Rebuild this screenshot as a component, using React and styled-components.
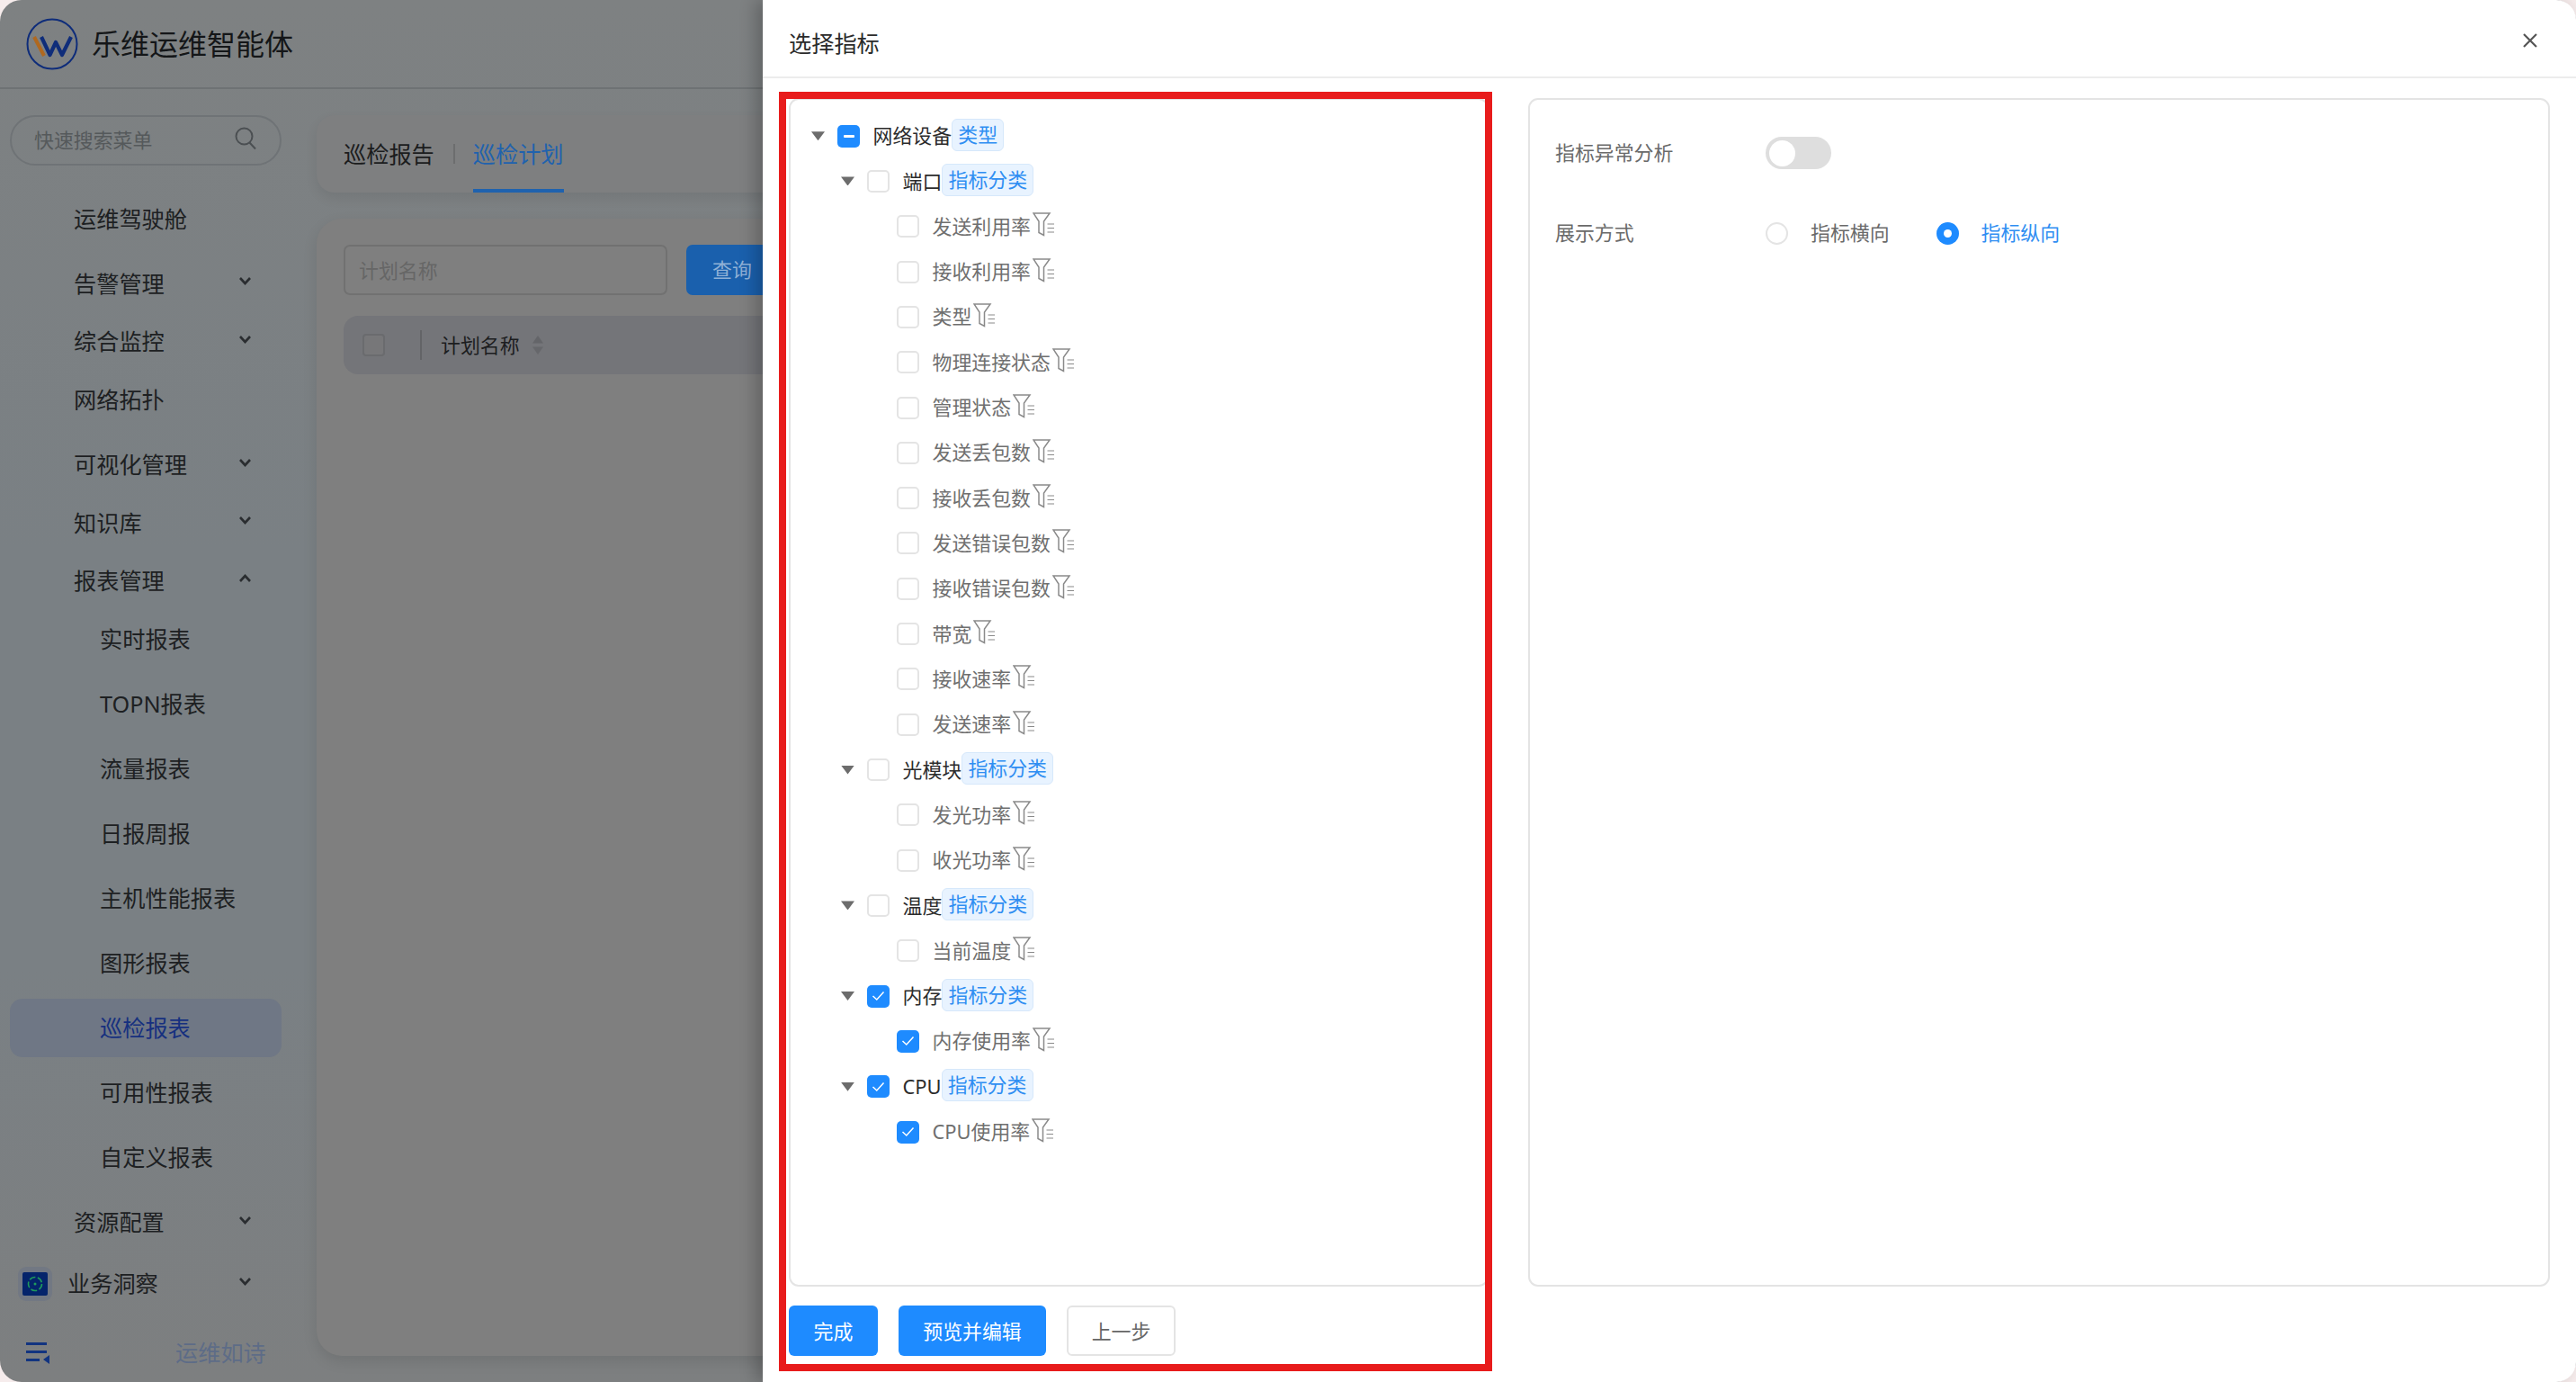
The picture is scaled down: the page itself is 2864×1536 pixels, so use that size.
import React from "react";
import styled, { createGlobalStyle } from "styled-components";

const Global = createGlobalStyle`
  html, body { margin: 0; padding: 0; background: #f6ecec; }
  body { font-family: "Noto Sans", "Noto Sans CJK SC", sans-serif; line-height: 1; }
  * { box-sizing: border-box; }
`;

const Page = styled.div`
  position: relative;
  width: 2864px;
  height: 1536px;
  overflow: hidden;
`;
const AppWindow = styled.div`
  width: 100%;
  height: 100%;
  border-radius: 24px;
  overflow: hidden;
  display: flex;
  flex-direction: column;
  background: linear-gradient(180deg, #7e8182 0%, #7a8084 40%, #7a8084 70%, #7d7f80 100%);
  color: #1d1f20;
  font-size: 25.2px;
`;
const TopBar = styled.header`
  height: 99px;
  flex: none;
  display: flex;
  align-items: center;
  padding-left: 29px;
  gap: 15px;
  border-bottom: 2px solid #6e7274;
`;
const Brand = styled.span`
  font-size: 32px;
  line-height: 1;
  color: #141618;
`;
const Body = styled.div`
  flex: 1;
  min-height: 0;
  display: flex;
`;
const Sidebar = styled.aside`
  width: 352px;
  flex: none;
  display: flex;
  flex-direction: column;
  padding: 29px 0 14px 11px;
`;
const SearchBox = styled.div`
  width: 302px;
  height: 56px;
  flex: none;
  border: 2px solid #6f7376;
  border-radius: 28px;
  display: flex;
  align-items: center;
  justify-content: space-between;
  padding: 0 26px 0 25px;
  font-size: 21.9px;
  color: #55595b;
  margin-bottom: 27px;
`;
const NavRow = styled.div`
  width: 302px;
  height: 64.7px;
  flex: none;
  display: flex;
  align-items: center;
  justify-content: space-between;
  padding: 0 34px 0 ${(p) => p.$indent}px;
  margin-bottom: ${(p) => (p.$leaf ? 7.3 : 0)}px;
  margin-top: ${(p) => p.$top || 0}px;
  border-radius: 14px;
  background: ${(p) => (p.$active ? "#6f7785" : "transparent")};
  color: ${(p) => (p.$active ? "#16307f" : "#1d2022")};
`;
const NavLabel = styled.span`
  display: flex;
  align-items: center;
`;
const InsightBadge = styled.span`
  width: 38px;
  height: 38px;
  border-radius: 9px;
  background: #727883;
  display: flex;
  align-items: center;
  justify-content: center;
  margin-right: 17px;
  margin-left: -62px;
`;
const SideFooter = styled.div`
  margin-top: auto;
  height: 36px;
  flex: none;
  display: flex;
  align-items: center;
  padding-left: 18px;
  gap: 140px;
  color: #5d6c87;
`;
const Main = styled.main`
  flex: 1;
  min-width: 0;
  display: flex;
  flex-direction: column;
  gap: 29px;
  padding: 29px 0;
`;
const TabCard = styled.div`
  height: 86px;
  flex: none;
  background: #7e7f80;
  border-radius: 20px 0 0 20px;
  box-shadow: 0 6px 14px rgba(0, 0, 0, 0.08);
  display: flex;
  align-items: stretch;
  padding-left: 30px;
`;
const Tab = styled.div`
  display: flex;
  align-items: center;
  padding-top: 6px;
  border-bottom: 4px solid ${(p) => (p.$active ? "#1f62ae" : "transparent")};
  color: ${(p) => (p.$active ? "#1f62ae" : "#1b1c1d")};
`;
const TabDivider = styled.div`
  width: 2px;
  height: 22px;
  background: #6c6d6e;
  align-self: center;
  margin: 0 20px 0 21px;
`;
const ContentCard = styled.div`
  flex: 1;
  background: #7f7f7f;
  border-radius: 28px 0 0 28px;
  box-shadow: 0 6px 16px rgba(0, 0, 0, 0.1);
  padding: 29px 0 0 30px;
`;
const FilterBar = styled.div`
  display: flex;
  gap: 21px;
  height: 56px;
`;
const PlanInput = styled.div`
  width: 360px;
  border: 2px solid #717171;
  border-radius: 7px;
  display: flex;
  align-items: center;
  padding: 2px 0 0 15px;
  font-size: 21.9px;
  color: #666666;
`;
const QueryButton = styled.div`
  width: 120px;
  background: #1a60ad;
  border-radius: 7px;
  color: #8fb0d6;
  font-size: 21.9px;
  display: flex;
  align-items: center;
  padding-left: 29px;
`;
const TableHead = styled.div`
  height: 65px;
  margin-top: 23px;
  background: #747579;
  border-radius: 16px 0 0 16px;
  display: flex;
  align-items: center;
  padding-left: 21px;
  font-size: 21.9px;
  color: #1c1d1f;
`;
const HeadCheck = styled.span`
  width: 25px;
  height: 25px;
  border: 2px solid #6a6b6e;
  border-radius: 4px;
  background: #777779;
`;
const HeadDivider = styled.span`
  width: 2px;
  height: 33px;
  background: #636467;
  margin: 0 21px 0 39px;
`;

const Drawer = styled.section`
  position: absolute;
  top: 0;
  right: 0;
  bottom: 0;
  width: 2016px;
  background: #ffffff;
  border-radius: 0 22px 22px 0;
  box-shadow: -8px 0 18px rgba(0, 0, 0, 0.22);
  display: flex;
  flex-direction: column;
`;
const DrawerHead = styled.div`
  height: 87px;
  flex: none;
  border-bottom: 2px solid #ececec;
  display: flex;
  align-items: center;
  justify-content: space-between;
  padding: 5px 43px 0 29px;
  font-size: 25.2px;
  color: #2b2b2b;
`;
const DrawerTitle = styled.span`
  padding-top: 8px;
`;
const DrawerBody = styled.div`
  flex: 1;
  min-height: 0;
  display: flex;
  gap: 44px;
  padding: 22px 29px 0 29px;
`;
const LeftColumn = styled.div`
  width: 778px;
  flex: none;
  display: flex;
  flex-direction: column;
`;
const TreePanel = styled.div`
  height: 1321px;
  flex: none;
  border: 2px solid #e4e4e4;
  border-radius: 11px;
  padding-top: 15px;
`;
const TreeRow = styled.div`
  height: 50.32px;
  display: flex;
  align-items: center;
  padding-left: ${(p) => 23 + p.$level * 33}px;
  font-size: 21.9px;
  line-height: 1;
  color: ${(p) => (p.$leaf ? "#6f6f6f" : "#2c2c2c")};
`;
const Caret = styled.span`
  width: 15px;
  height: 10px;
  flex: none;
  margin-right: 14px;
  background: #6c6c6c;
  clip-path: polygon(0 0, 100% 0, 50% 100%);
  visibility: ${(p) => (p.$hidden ? "hidden" : "visible")};
`;
const Check = styled.span`
  width: 25px;
  height: 25px;
  flex: none;
  margin-right: 14.5px;
  border-radius: 5px;
  display: flex;
  align-items: center;
  justify-content: center;
  border: ${(p) => (p.$state === "none" ? "2px solid #e4e4e4" : "none")};
  background: ${(p) => (p.$state === "none" ? "#ffffff" : "#1e8bff")};
`;
const Minus = styled.span`
  width: 12px;
  height: 3px;
  border-radius: 1px;
  background: #ffffff;
`;
const Tag = styled.span`
  height: 36px;
  flex: none;
  margin-bottom: 3px;
  padding: 0 6.2px;
  display: flex;
  align-items: center;
  background: #e8f3ff;
  border: 1.5px solid #d6e8fb;
  border-radius: 6px;
  color: #2f8ef2;
  font-size: 21.9px;
`;
const Footer = styled.div`
  display: flex;
  gap: 23px;
  margin-top: 21px;
`;
const ActionButton = styled.button`
  height: 56px;
  width: ${(p) => p.$w}px;
  padding: 0 0 2px;
  border-radius: 6px;
  border: ${(p) => (p.$primary ? "none" : "2px solid #e4e4e4")};
  background: ${(p) => (p.$primary ? "#1e8bff" : "#ffffff")};
  color: ${(p) => (p.$primary ? "#ffffff" : "#666666")};
  font-family: inherit;
  font-size: 21.9px;
`;
const SettingsPanel = styled.div`
  flex: 1;
  height: 1321px;
  border: 2px solid #e4e4e4;
  border-radius: 11px;
  padding: 0 0 0 28px;
`;
const SettingRow = styled.div`
  height: ${(p) => p.$h}px;
  margin-top: ${(p) => p.$mt}px;
  display: flex;
  align-items: center;
  font-size: 21.9px;
  color: #6a6a6a;
`;
const SettingLabel = styled.span`
  width: 234px;
  flex: none;
`;
const Switch = styled.span`
  width: 73px;
  height: 36px;
  padding: 3.5px;
  border-radius: 18px;
  background: #dedede;
  display: flex;
`;
const Knob = styled.span`
  width: 29px;
  height: 29px;
  border-radius: 50%;
  background: #ffffff;
`;
const RadioDot = styled.span`
  width: 25px;
  height: 25px;
  flex: none;
  border-radius: 50%;
  margin-right: 25px;
  display: flex;
  align-items: center;
  justify-content: center;
  border: ${(p) => (p.$on ? "none" : "2px solid #e4e4e4")};
  background: ${(p) => (p.$on ? "#1e8bff" : "#ffffff")};
`;
const RadioInner = styled.span`
  width: 9px;
  height: 9px;
  border-radius: 50%;
  background: #ffffff;
`;
const RadioText = styled.span`
  color: ${(p) => (p.$on ? "#2f8ef2" : "#6a6a6a")};
  margin-right: 52px;
`;
const Highlight = styled.div`
  position: absolute;
  left: 866px;
  top: 102px;
  width: 793px;
  height: 1422px;
  border: 8px solid #e81c1c;
  pointer-events: none;
`;

const Logo = () => (
  <svg width="58" height="58" viewBox="0 0 58 58" fill="none">
    <circle cx="29" cy="29" r="27.5" stroke="#0f2d7a" strokeWidth="2" />
    <path d="M9 21L20 42" stroke="#b0681f" strokeWidth="4" />
    <path d="M17 21L26.5 41L33 27L40 41L50 21" stroke="#0f2d7a" strokeWidth="4.2" strokeLinejoin="round" />
  </svg>
);
const SearchIcon = () => (
  <svg width="24" height="26" viewBox="0 0 24 26" fill="none" stroke="#4b4f52" strokeWidth="2" style={{ marginTop: -4 }}>
    <circle cx="10.5" cy="10.5" r="9" />
    <path d="M16.5 17.5L23 24.5" />
  </svg>
);
const Chevron = ({ up }) => (
  <svg width="13" height="10" viewBox="0 0 13 10" fill="none" stroke="#2a2d30" strokeWidth="2.6" style={{ transform: "translateY(-3px)" }}>
    <path d={up ? "M1 8L6.5 2L12 8" : "M1 2L6.5 8L12 2"} />
  </svg>
);
const InsightIcon = () => (
  <svg width="28" height="26" viewBox="0 0 28 26">
    <rect width="28" height="26" rx="2" fill="#05246b" />
    <circle cx="14" cy="13" r="7.5" fill="none" stroke="#1f9a5c" strokeWidth="1.6" strokeDasharray="7 2.5" />
    <circle cx="14" cy="13" r="1.5" fill="#1f9a5c" />
  </svg>
);
const MenuIcon = () => (
  <svg width="26" height="24" viewBox="0 0 26 24" fill="#123480">
    <rect x="0" y="0" width="23" height="3" />
    <rect x="0" y="9" width="23" height="3" />
    <rect x="0" y="18" width="15" height="3" />
    <path d="M26 14V24L19 19Z" />
  </svg>
);
const SortIcon = () => (
  <svg width="14" height="21" viewBox="0 0 14 21" fill="#646569" style={{ marginLeft: 13 }}>
    <path d="M7 0L13 8.5H1Z" />
    <path d="M7 21L13 12.5H1Z" opacity="0.85" />
  </svg>
);
const CheckMark = () => (
  <svg width="15" height="12" viewBox="0 0 15 12" fill="none" stroke="#ffffff" strokeWidth="1.5">
    <path d="M1.5 6L5.8 10L13.5 1.5" />
  </svg>
);
const FilterIcon = () => (
  <svg width="24" height="27" viewBox="0 0 24 27" fill="none" stroke="#8a8a8a" strokeWidth="1.5" style={{ marginLeft: 2, marginTop: -4, flex: "none" }}>
    <path d="M1 1H19L12.5 10V25.5L7 22.5V10Z" />
    <path d="M16.5 13H24M16.5 17.5H24M16.5 22H24" strokeWidth="1.2" />
  </svg>
);
const CloseIcon = () => (
  <svg width="16" height="16" viewBox="0 0 16 16" stroke="#555555" strokeWidth="2.2" style={{ marginTop: -1 }}>
    <path d="M1 1L15 15M15 1L1 15" />
  </svg>
);

const nav = [
  { label: "运维驾驶舱", leaf: true },
  { label: "告警管理" },
  { label: "综合监控" },
  { label: "网络拓扑", leaf: true },
  { label: "可视化管理" },
  { label: "知识库" },
  { label: "报表管理", open: true },
  { label: "实时报表", sub: true },
  { label: "TOPN报表", sub: true },
  { label: "流量报表", sub: true },
  { label: "日报周报", sub: true },
  { label: "主机性能报表", sub: true },
  { label: "图形报表", sub: true },
  { label: "巡检报表", sub: true, active: true },
  { label: "可用性报表", sub: true },
  { label: "自定义报表", sub: true },
  { label: "资源配置" },
];

const tree = [
  { level: 0, label: "网络设备", tag: "类型", state: "part" },
  { level: 1, label: "端口", tag: "指标分类", state: "none" },
  ...["发送利用率", "接收利用率", "类型", "物理连接状态", "管理状态", "发送丢包数", "接收丢包数", "发送错误包数", "接收错误包数", "带宽", "接收速率", "发送速率"].map((label) => ({ level: 2, label, state: "none", leaf: true })),
  { level: 1, label: "光模块", tag: "指标分类", state: "none" },
  { level: 2, label: "发光功率", state: "none", leaf: true },
  { level: 2, label: "收光功率", state: "none", leaf: true },
  { level: 1, label: "温度", tag: "指标分类", state: "none" },
  { level: 2, label: "当前温度", state: "none", leaf: true },
  { level: 1, label: "内存", tag: "指标分类", state: "on" },
  { level: 2, label: "内存使用率", state: "on", leaf: true },
  { level: 1, label: "CPU", tag: "指标分类", state: "on" },
  { level: 2, label: "CPU使用率", state: "on", leaf: true },
];

export default function App() {
  return (
    <Page>
      <Global />
      <AppWindow>
        <TopBar>
          <Logo />
          <Brand>乐维运维智能体</Brand>
        </TopBar>
        <Body>
          <Sidebar>
            <SearchBox>
              快速搜索菜单
              <SearchIcon />
            </SearchBox>
            {nav.map((n) => (
              <NavRow key={n.label} $indent={n.sub ? 100 : 71} $leaf={n.leaf || n.sub} $active={n.active}>
                <NavLabel>{n.label}</NavLabel>
                {!n.leaf && !n.sub && <Chevron up={n.open} />}
              </NavRow>
            ))}
            <NavRow $indent={71} $top={3.3}>
              <NavLabel>
                <InsightBadge>
                  <InsightIcon />
                </InsightBadge>
                业务洞察
              </NavLabel>
              <Chevron />
            </NavRow>
            <SideFooter>
              <MenuIcon />
              运维如诗
            </SideFooter>
          </Sidebar>
          <Main>
            <TabCard>
              <Tab>巡检报告</Tab>
              <TabDivider />
              <Tab $active>巡检计划</Tab>
            </TabCard>
            <ContentCard>
              <FilterBar>
                <PlanInput>计划名称</PlanInput>
                <QueryButton>查询</QueryButton>
              </FilterBar>
              <TableHead>
                <HeadCheck />
                <HeadDivider />
                计划名称
                <SortIcon />
              </TableHead>
            </ContentCard>
          </Main>
        </Body>
      </AppWindow>
      <Drawer>
        <DrawerHead>
          <DrawerTitle>选择指标</DrawerTitle>
          <CloseIcon />
        </DrawerHead>
        <DrawerBody>
          <LeftColumn>
            <TreePanel>
              {tree.map((t, i) => (
                <TreeRow key={i} $level={t.level} $leaf={t.leaf}>
                  <Caret $hidden={t.leaf} />
                  <Check $state={t.state}>
                    {t.state === "part" && <Minus />}
                    {t.state === "on" && <CheckMark />}
                  </Check>
                  {t.label}
                  {t.tag && <Tag>{t.tag}</Tag>}
                  {t.leaf && <FilterIcon />}
                </TreeRow>
              ))}
            </TreePanel>
            <Footer>
              <ActionButton $primary $w={99}>完成</ActionButton>
              <ActionButton $primary $w={164}>预览并编辑</ActionButton>
              <ActionButton $w={121}>上一步</ActionButton>
            </Footer>
          </LeftColumn>
          <SettingsPanel>
            <SettingRow $h={36} $mt={41}>
              <SettingLabel>指标异常分析</SettingLabel>
              <Switch>
                <Knob />
              </Switch>
            </SettingRow>
            <SettingRow $h={36} $mt={53}>
              <SettingLabel>展示方式</SettingLabel>
              <RadioDot />
              <RadioText>指标横向</RadioText>
              <RadioDot $on>
                <RadioInner />
              </RadioDot>
              <RadioText $on>指标纵向</RadioText>
            </SettingRow>
          </SettingsPanel>
        </DrawerBody>
      </Drawer>
      <Highlight />
    </Page>
  );
}
